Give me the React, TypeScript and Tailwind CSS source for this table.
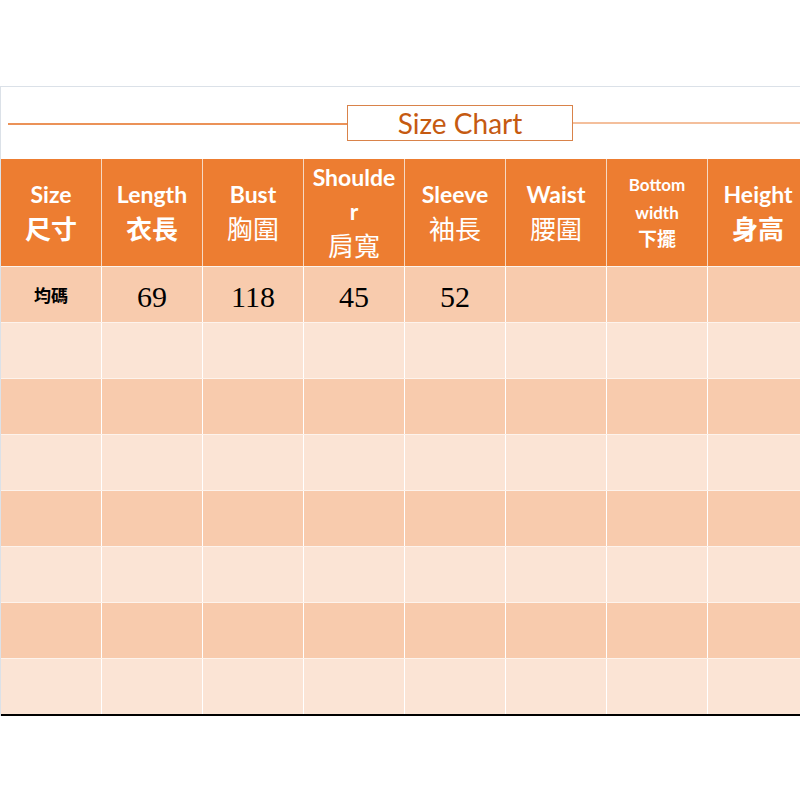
import React from "react";

const latin = "font-['Lato','Noto_Sans_CJK_TC',sans-serif]";

type H = { en: string[]; zh: string; zhBold: boolean; small?: boolean };

const headers: H[] = [
  { en: ["Size"], zh: "尺寸", zhBold: true },
  { en: ["Length"], zh: "衣長", zhBold: true },
  { en: ["Bust"], zh: "胸圍", zhBold: false },
  { en: ["Shoulde", "r"], zh: "肩寬", zhBold: false },
  { en: ["Sleeve"], zh: "袖長", zhBold: false },
  { en: ["Waist"], zh: "腰圍", zhBold: false },
  { en: ["Bottom", "width"], zh: "下擺", zhBold: true, small: true },
  { en: ["Height"], zh: "身高", zhBold: true },
];

const firstRow = ["均碼", "69", "118", "45", "52", "", "", ""];

export default function App() {
  const rows = Array.from({ length: 8 }, (_, i) => i);
  return (
    <div className="w-[800px] h-[800px] bg-white overflow-hidden">
      <div className="pt-[86px]">
        <div className="border-t border-l border-[#dbe1e8]">
          {/* title */}
          <div className="h-[72px] flex items-center pl-[7px]">
            <div className="w-[339px] h-[2px] bg-[#eb9258] translate-y-[1px]" />
            <div className="w-[226px] h-[36px] border border-[#d9834a] flex items-center justify-center">
              <span className="font-['Lato',sans-serif] text-[28px] text-[#c55a11] leading-none">Size Chart</span>
            </div>
            <div className="flex-1 h-[2px] bg-[#f4bf9c]" />
          </div>
          {/* table */}
          <div className="border-b-2 border-black">
            <div className="flex h-[107px] bg-[#ed7d31]">
              {headers.map((h, i) => (
                <div
                  key={i}
                  className={`shrink-0 w-[101px] border-r border-[#f6d9c4] flex flex-col items-center justify-center text-white ${latin}`}
                >
                  {h.en.map((t, j) => (
                    <div
                      key={j}
                      className={`font-bold leading-none ${h.small ? "text-[17px] h-[28px] pt-[4px]" : "text-[23px] h-[34px] pt-[4px]"}`}
                    >
                      {t}
                    </div>
                  ))}
                  <div
                    className={`leading-none font-['Noto_Sans_CJK_TC',sans-serif] ${
                      h.zhBold ? "font-bold" : "font-normal"
                    } ${h.small ? "text-[19px] h-[26px]" : "text-[26px] h-[34px] pt-[2px]"}`}
                  >
                    {h.zh}
                  </div>
                </div>
              ))}
            </div>
            {rows.map((r) => (
              <div
                key={r}
                className={`flex h-[56px] border-t border-[#fdf3ec] ${r % 2 === 0 ? "bg-[#f8cbad]" : "bg-[#fbe4d5]"}`}
              >
                {firstRow.map((v, c) => (
                  <div
                    key={c}
                    className="shrink-0 w-[101px] border-r border-white flex items-center justify-center"
                  >
                    {r === 0 && v !== "" ? (
                      c === 0 ? (
                        <span className="font-['Noto_Sans_CJK_TC',sans-serif] font-bold text-[17px] text-black">{v}</span>
                      ) : (
                        <span className="font-['Liberation_Serif',serif] text-[30px] text-black pt-[3px]">{v}</span>
                      )
                    ) : null}
                  </div>
                ))}
              </div>
            ))}
          </div>
        </div>
      </div>
    </div>
  );
}
